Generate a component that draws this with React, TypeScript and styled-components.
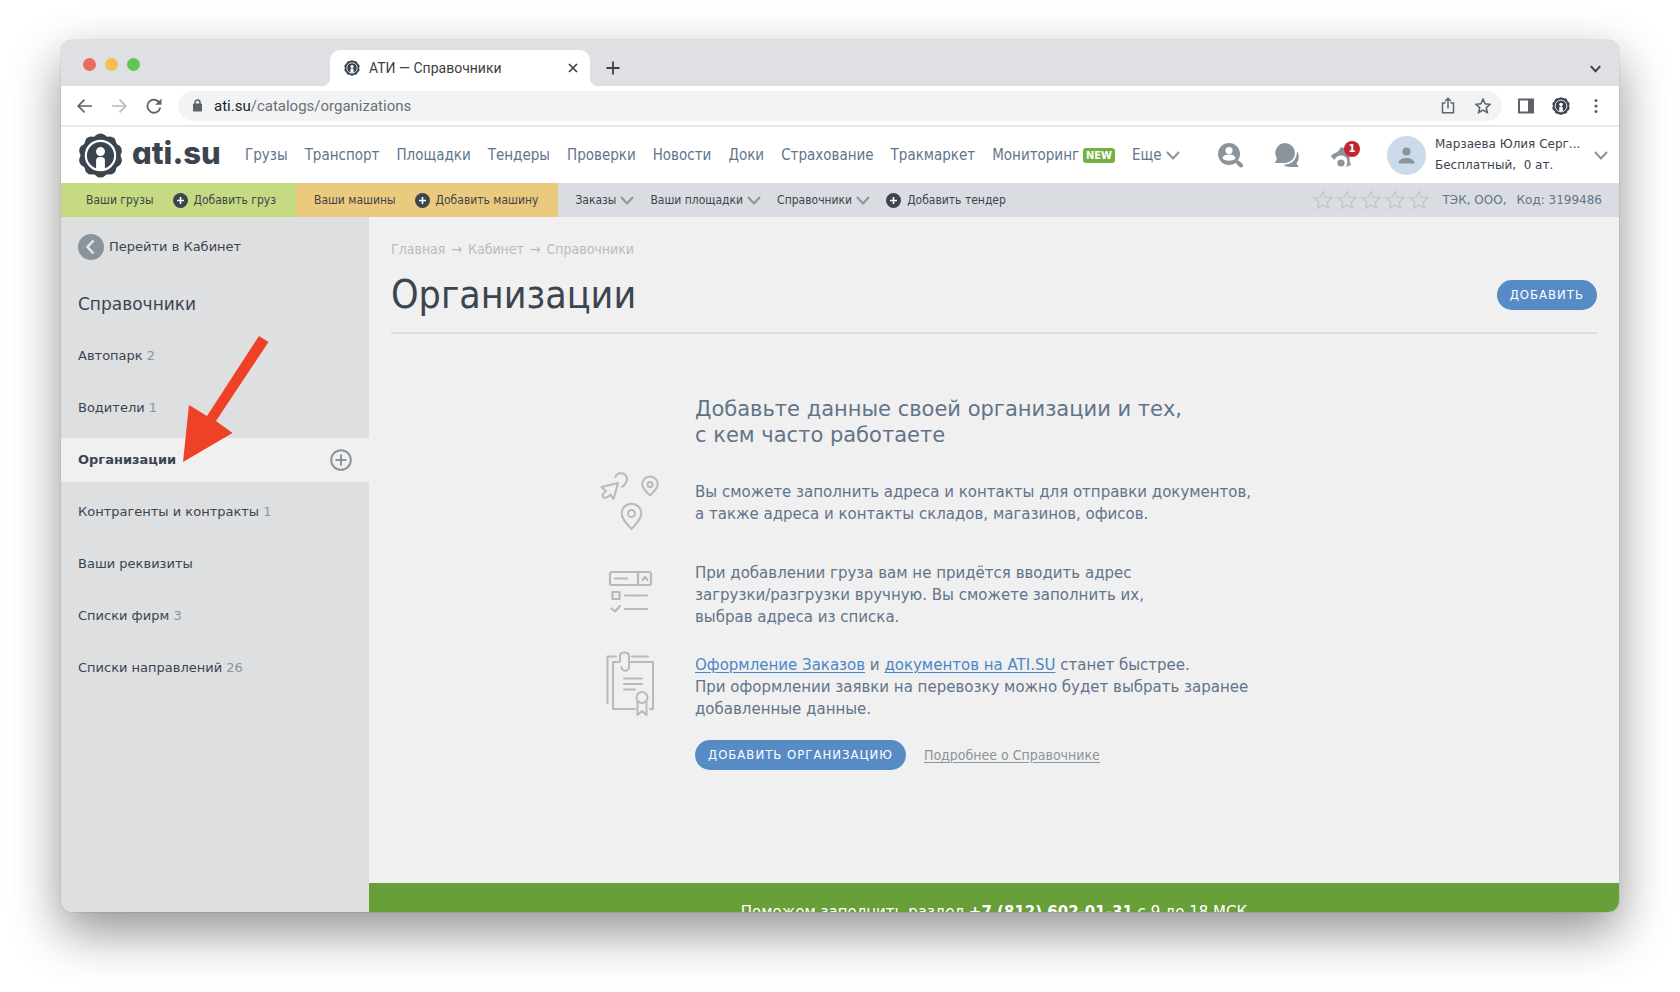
import React from 'react';
import styled, { createGlobalStyle, css } from 'styled-components';

const verdana = `"DejaVu Sans", Verdana, sans-serif`;
const tahoma = `"DejaVu Sans Condensed", "DejaVu Sans", Tahoma, sans-serif`;
const roboto = `Roboto, Arial, sans-serif`;
const ink = '#3b4550';
const slate = '#62748a';
const grey = '#8c949b';

const GlobalStyle = createGlobalStyle`
  * { box-sizing: border-box; }
  body { margin: 0; background: #fff; color: ${ink}; font-family: ${verdana}; }
  button { border: 0; padding: 0; background: none; font: inherit; color: inherit; cursor: pointer; }
  a { color: inherit; text-decoration: none; }
  h1, h2, p, ul { margin: 0; padding: 0; font-weight: 400; }
  ul { list-style: none; }
  svg { display: block; flex: none; }
`;

const Desktop = styled.div`
  height: 100vh;
  min-height: 600px;
  padding: 40px 61px 80px;
  overflow: hidden;
`;
const BrowserWindow = styled.div`
  height: 100%;
  display: flex;
  flex-direction: column;
  overflow: hidden;
  border-radius: 11px;
  background: #fff;
  box-shadow: 0 0 1px rgba(0, 0, 0, 0.5), 0 20px 50px rgba(0, 0, 0, 0.43);
`;
const TabStrip = styled.div`
  height: 46px;
  flex: none;
  display: flex;
  align-items: flex-end;
  background: #dee0e4;
  padding: 0 18px 0 22px;
`;
const Lights = styled.div`
  display: flex;
  gap: 9px;
  width: 247px;
  height: 43px;
  align-items: center;
`;
const Light = styled.button<{ $color: string }>`
  width: 13px;
  height: 13px;
  border-radius: 50%;
  background: ${(p) => p.$color};
`;
const Tab = styled.div`
  position: relative;
  width: 260px;
  height: 36px;
  display: flex;
  align-items: center;
  gap: 9px;
  padding: 0 12px 0 14px;
  border-radius: 10px 10px 0 0;
  background: #fff;
  font: 14px/16px ${roboto};
  color: #3c4043;
  &::before, &::after {
    content: '';
    position: absolute;
    bottom: 0;
    width: 8px;
    height: 8px;
  }
  &::before { left: -8px; background: radial-gradient(circle at 0 0, transparent 8px, #fff 8px); }
  &::after { right: -8px; background: radial-gradient(circle at 100% 0, transparent 8px, #fff 8px); }
`;
const TabTitle = styled.span`
  flex: 1;
  white-space: nowrap;
`;
const StripButton = styled.button<{ $end?: boolean }>`
  height: 36px;
  display: flex;
  align-items: center;
  margin-left: ${(p) => (p.$end ? 'auto' : '16px')};
`;
const Toolbar = styled.div`
  height: 41px;
  flex: none;
  display: flex;
  align-items: center;
  gap: 16px;
  padding: 0 15px;
  border-bottom: 2px solid #e8e8ea;
`;
const Omnibox = styled.div`
  flex: 1;
  height: 30px;
  display: flex;
  align-items: center;
  gap: 20px;
  padding: 0 11px 0 14px;
  border-radius: 15px;
  background: #f1f3f4;
`;
const Address = styled.div`
  flex: 1;
  display: flex;
  align-items: center;
  gap: 11px;
  font: 15px/20px ${roboto};
  color: #6b6f73;
  b { font-weight: 400; color: #202124; }
`;
const ToolGroup = styled.div`
  display: flex;
  align-items: center;
  gap: 18px;
`;

const Header = styled.header`
  height: 56px;
  flex: none;
  display: flex;
  align-items: center;
  padding: 0 11px 0 17px;
  background: #fff;
`;
const Brand = styled.a`
  display: flex;
  align-items: center;
  gap: 9px;
  width: 167px;
  font: 800 31px/40px Inter, sans-serif;
  font-feature-settings: 'cv11' 1;
  color: ${ink};
`;
const Wordmark = styled.span`
  padding-bottom: 5px;
`;
const Nav = styled.nav`
  display: flex;
  align-items: center;
  gap: 17px;
  font: 15px/20px ${tahoma};
  color: ${slate};
  white-space: nowrap;
  a, button { display: flex; align-items: center; gap: 4px; }
`;
const NewBadge = styled.span`
  padding: 0 3px;
  border-radius: 3px;
  background: #76b043;
  color: #fff;
  font: 700 11px/15px ${tahoma};
`;
const UserArea = styled.div`
  margin-left: auto;
  display: flex;
  align-items: center;
`;
const HeaderIcons = styled.div`
  display: flex;
  align-items: center;
  gap: 31px;
  margin-right: 34px;
`;
const IconWithCount = styled.button`
  position: relative;
`;
const Count = styled.span`
  position: absolute;
  top: -1px;
  right: -7px;
  width: 16px;
  height: 16px;
  border-radius: 50%;
  background: #c1272d;
  color: #fff;
  font: 700 10px/16px ${verdana};
  text-align: center;
`;
const UserText = styled.div`
  width: 151px;
  margin: 0 8px 0 9px;
  font: 12px/21px ${verdana};
  white-space: pre;
`;

const SubBar = styled.div`
  height: 34px;
  flex: none;
  display: flex;
  align-items: stretch;
  background: #d9dce1;
  font: 12px/16px ${tahoma};
  white-space: nowrap;
`;
const SubGroup = styled.div<{ $tone?: string; $left: number }>`
  display: flex;
  align-items: center;
  gap: ${(p) => (p.$tone ? 19 : 16)}px;
  padding: 0 20px 0 ${(p) => p.$left}px;
  background: ${(p) => p.$tone || 'transparent'};
  a, button { display: flex; align-items: center; gap: 4px; }
`;
const AddLink = styled.a`
  && { gap: 6px; }
`;
const Firm = styled.div`
  margin-left: auto;
  display: flex;
  align-items: center;
  gap: 10px;
  padding-right: 17px;
  font: 12px/16px ${verdana};
  color: ${slate};
`;
const Stars = styled.div`
  display: flex;
  gap: 4px;
  margin-right: 4px;
`;

const Page = styled.div`
  flex: 1;
  min-height: 0;
  display: flex;
  overflow: hidden;
`;
const Sidebar = styled.aside`
  position: relative;
  flex: none;
  width: 308px;
  background: #dddfe1;
  font: 13px/20px ${verdana};
`;
const BackLink = styled.a`
  display: flex;
  align-items: center;
  gap: 5px;
  margin: 17px 17px 0;
`;
const SideTitle = styled.h2`
  margin: 32px 17px 18px;
  font-size: 17px;
  line-height: 24px;
`;
const SideList = styled.ul`
  display: grid;
  gap: 8px;
`;
const SideItem = styled.li<{ $active?: boolean }>`
  height: 44px;
  display: flex;
  align-items: center;
  justify-content: space-between;
  padding: 0 17px;
  ${(p) => p.$active && css`
    background: #f0f0f0;
    font-weight: 700;
  `}
  span { color: ${grey}; }
`;
const Pointer = styled.svg`
  position: absolute;
  left: 122px;
  top: 119px;
`;

const Main = styled.main`
  flex: 1;
  background: #f0f0f0;
`;
const Content = styled.div`
  padding: 22px 22px 113px;
`;
const Crumbs = styled.nav`
  display: flex;
  gap: 6px;
  font: 14px/20px ${tahoma};
  color: #b9bbbd;
`;
const TitleRow = styled.div`
  display: flex;
  align-items: center;
  justify-content: space-between;
  padding: 14px 0 15px;
  border-bottom: 2px solid #dcddde;
`;
const Title = styled.h1`
  font: 39px/44px ${tahoma};
`;
const PillButton = styled.button`
  height: 30px;
  padding: 0 13px;
  border-radius: 15px;
  background: #578bc5;
  color: #fff;
  font: 13px/30px ${tahoma};
  letter-spacing: 1px;
`;
const Guide = styled.section`
  width: 788px;
  margin: 62px auto 0;
  display: grid;
  grid-template-columns: 60px 1fr;
  column-gap: 35px;
  row-gap: 26px;
  font-size: 15px;
  line-height: 22px;
  color: ${slate};
`;
const GuideTitle = styled.h2`
  grid-column: 2;
  margin-bottom: -4px;
  font-size: 21px;
  line-height: 26px;
`;
const GuideText = styled.p`
  min-height: 66px;
  display: flex;
  flex-direction: column;
  justify-content: center;
  white-space: nowrap;
`;
const TextLink = styled.a`
  color: #4a87c7;
  text-decoration: underline;
  text-underline-offset: 2px;
`;
const Actions = styled.div`
  grid-column: 2;
  margin-top: -6px;
  display: flex;
  align-items: center;
  gap: 18px;
`;
const MoreLink = styled.a`
  font: 14px/20px ${tahoma};
  color: ${grey};
  text-decoration: underline;
  text-underline-offset: 2px;
`;
const HelpBar = styled.footer`
  padding: 19px 20px;
  background: #689f38;
  color: #fff;
  text-align: center;
  font-size: 15px;
  line-height: 20px;
`;

const Emblem = ({ size }: { size: number }) => (
  <svg width={size} height={size} viewBox="0 0 46 46" aria-hidden="true">
    <circle cx="23" cy="23" r="20.600" fill={ink} />
    {Array.from({ length: 10 }, (_, i) => {
      const a = (i * Math.PI) / 5 - Math.PI / 2;
      return <circle key={i} cx={23 + 16 * Math.cos(a)} cy={23 + 16 * Math.sin(a)} r="6.6" fill={ink} />;
    })}
    <circle cx="23" cy="23" r="15" fill="none" stroke="#fff" strokeWidth="2.2" />
    <circle cx="23" cy="19" r="4.600" fill="#fff" />
    <path d="M18.500 37V28c0-2.500 1.500-3.500 4.500-3.500s4.500 1 4.500 3.500v9z" fill="#fff" />
  </svg>
);
const Chevron = ({ color = grey, size = 14, weight = 2 }) => (
  <svg width={size} height={size} viewBox="0 0 14 14" fill="none" stroke={color} strokeWidth={weight} aria-hidden="true">
    <path d="M1 4l6 6.500L13 4" />
  </svg>
);
const PlusDisc = () => (
  <svg width="15" height="15" viewBox="0 0 15 15" aria-hidden="true">
    <circle cx="7.5" cy="7.5" r="7.5" fill={ink} />
    <path d="M7.500 4v7M4 7.500h7" stroke="#fff" strokeWidth="1.600" />
  </svg>
);
const starPath = 'M10 1.500l2.600 5.700 6.100.700-4.600 4.200 1.300 6.100L10 15.100l-5.400 3.100 1.300-6.100L1.300 7.900l6.100-.700z';
const Star = ({ size, color, weight }: { size: number; color: string; weight: number }) => (
  <svg width={size} height={size} viewBox="0 0 20 20" fill="none" stroke={color} strokeWidth={weight} aria-hidden="true">
    <path d={starPath} />
  </svg>
);

const navItems = ['Грузы', 'Транспорт', 'Площадки', 'Тендеры', 'Проверки', 'Новости', 'Доки', 'Страхование', 'Тракмаркет'];
const sideItems: { label: string; count?: number; active?: boolean }[] = [
  { label: 'Автопарк', count: 2 },
  { label: 'Водители', count: 1 },
  { label: 'Организации', active: true },
  { label: 'Контрагенты и контракты', count: 1 },
  { label: 'Ваши реквизиты' },
  { label: 'Списки фирм', count: 3 },
  { label: 'Списки направлений', count: 26 },
];

const PinsArt = () => (
  <svg width="60" height="66" viewBox="0 0 60 66" fill="none" stroke="#b7b9bb" strokeWidth="2" strokeLinejoin="round" strokeLinecap="round" aria-hidden="true">
    <path d="M1.500 17L18 13l-4.500 16-3-4.500c-2 2.500-5.500 4.500-7.500 2.500-1.500-2 .500-4 3-5.500z" />
    <path d="M15.500 7c2-6 11-4.500 11.500 2 0 3.500-2.500 6-5 8" />
    <path d="M50 25.500c-4-4-7.800-7-7.800-11.200a7.800 7.800 0 0 1 15.600 0c0 4.200-3.800 7.200-7.800 11.200z" />
    <circle cx="50" cy="14.500" r="2.500" />
    <path d="M31.500 59c-5-5.500-9.800-10-9.800-15.500a9.800 9.800 0 0 1 19.600 0c0 5.500-4.800 10-9.800 15.500z" />
    <circle cx="31.500" cy="43.500" r="3.500" />
  </svg>
);
const FormArt = () => (
  <svg width="60" height="66" viewBox="0 0 60 66" fill="none" stroke="#b7b9bb" strokeWidth="2.200" strokeLinejoin="round" strokeLinecap="round" aria-hidden="true">
    <rect x="10" y="10" width="41" height="13" rx="2" />
    <path d="M38 10v13M15 16.500h12M42.500 18l2.500-3 2.500 3" />
    <rect x="12.500" y="30" width="7" height="7" />
    <path d="M25 33.500h22M25 47h22M11.500 46.500l3.500 3 5-5.500" />
  </svg>
);
const DocumentArt = () => (
  <svg width="60" height="66" viewBox="0 0 60 66" fill="none" stroke="#b7b9bb" strokeWidth="2" strokeLinejoin="round" strokeLinecap="round" overflow="visible" aria-hidden="true">
    <path d="M7.500 49V2.500H16M32 2.500h16" />
    <path d="M18 8h-5v47h22M30 8h23v47h-3" />
    <path d="M20 8V1.500a4 4 0 0 1 4-3h1a4 4 0 0 1 4 3V13a3.500 3.500 0 0 1-7.500 0" />
    <path d="M24 24.500h18M24 30h18M24 35.500h11" />
    <circle cx="42" cy="43.500" r="5.500" />
    <path d="M37.500 48v13l4.500-4 4.500 4V48" />
  </svg>
);

export default function App() {
  return (
    <>
      <GlobalStyle />
      <Desktop>
        <BrowserWindow>
          <TabStrip>
            <Lights>
              <Light $color="#ed6a5e" aria-label="Закрыть окно" />
              <Light $color="#f5bf4f" aria-label="Свернуть" />
              <Light $color="#61c554" aria-label="Развернуть" />
            </Lights>
            <Tab>
              <Emblem size={16} />
              <TabTitle>АТИ — Справочники</TabTitle>
              <button aria-label="Закрыть вкладку">
                <svg width="10" height="10" viewBox="0 0 10 10" stroke="#3c4043" strokeWidth="1.700">
                  <path d="M1 1l8 8M9 1L1 9" />
                </svg>
              </button>
            </Tab>
            <StripButton aria-label="Новая вкладка">
              <svg width="14" height="14" viewBox="0 0 14 14" stroke="#3c4043" strokeWidth="1.800">
                <path d="M7 .500v13M.500 7h13" />
              </svg>
            </StripButton>
            <StripButton $end aria-label="Список вкладок">
              <Chevron color="#3c4043" size={11} weight={2.4} />
            </StripButton>
          </TabStrip>
          <Toolbar>
            <ToolGroup>
              <button aria-label="Назад">
                <svg width="17" height="16" viewBox="0 0 17 16" fill="none" stroke="#5f6368" strokeWidth="1.700">
                  <path d="M16 8H2.500M8.500 1.700L2.200 8l6.300 6.300" />
                </svg>
              </button>
              <button aria-label="Вперёд">
                <svg width="17" height="16" viewBox="0 0 17 16" fill="none" stroke="#b9bbbe" strokeWidth="1.700">
                  <path d="M1 8h13.500M8.500 1.700L14.800 8l-6.300 6.300" />
                </svg>
              </button>
              <button aria-label="Обновить">
                <svg width="16" height="16" viewBox="0 0 16 16" fill="none" stroke="#5f6368" strokeWidth="1.800">
                  <path d="M13.600 5A6.500 6.500 0 1 0 14.300 9.500" />
                  <path d="M15.500.500v6.300H9.200z" fill="#5f6368" stroke="none" />
                </svg>
              </button>
            </ToolGroup>
            <Omnibox>
              <Address>
                <svg width="11" height="13" viewBox="0 0 11 13" aria-hidden="true">
                  <rect x="1" y="4.500" width="9" height="8" rx="1" fill="#5f6368" />
                  <path d="M3 5V3.500a2.500 2.500 0 0 1 5 0V5" fill="none" stroke="#5f6368" strokeWidth="1.500" />
                </svg>
                <span><b>ati.su</b>/catalogs/organizations</span>
              </Address>
              <button aria-label="Поделиться">
                <svg width="14" height="17" viewBox="0 0 14 17" fill="none" stroke="#5f6368" strokeWidth="1.500">
                  <path d="M4.500 6H1.500v9.700h11V6h-3M7 11.500V1.500M4 4.300l3-3 3 3" />
                </svg>
              </button>
              <button aria-label="В закладки"><Star size={16} color="#5f6368" weight={2} /></button>
            </Omnibox>
            <ToolGroup>
              <button aria-label="Боковая панель">
                <svg width="16" height="16" viewBox="2 0 16 16">
                  <path d="M3 1.500h14v13H3z" fill="#fff" stroke="#5f6368" strokeWidth="2" />
                  <path d="M12 1h5v14h-5z" fill="#5f6368" />
                </svg>
              </button>
              <button aria-label="Профиль"><Emblem size={18} /></button>
              <button aria-label="Меню">
                <svg width="16" height="16" viewBox="0 0 16 16" fill="#5f6368">
                  <circle cx="8" cy="2.500" r="1.600" />
                  <circle cx="8" cy="8" r="1.600" />
                  <circle cx="8" cy="13.500" r="1.600" />
                </svg>
              </button>
            </ToolGroup>
          </Toolbar>

          <Header>
            <Brand href="#"><Emblem size={45} /><Wordmark>ati.su</Wordmark></Brand>
            <Nav>
              {navItems.map((item) => <a key={item} href="#">{item}</a>)}
              <a href="#">Мониторинг<NewBadge>NEW</NewBadge></a>
              <button>Еще<Chevron /></button>
            </Nav>
            <UserArea>
              <HeaderIcons>
                <button aria-label="Поиск участников">
                  <svg width="26" height="26" viewBox="0 0 26 26">
                    <circle cx="12" cy="12" r="11" fill={grey} />
                    <path d="M21 20.500l3 3" stroke={grey} strokeWidth="4" strokeLinecap="round" />
                    <circle cx="12" cy="8.500" r="3.500" fill="#fff" />
                    <path d="M5.500 16.500c.500-3.500 3.500-4 6.500-4s6 .500 6.500 4c-3.500 3-9.500 3-13 0z" fill="#fff" />
                  </svg>
                </button>
                <button aria-label="Сообщения">
                  <svg width="26" height="26" viewBox="0 0 26 26" fill={grey}>
                    <path d="M11 1a10 10 0 1 1 0 20H1l2-4.500A10 10 0 0 1 11 1z" />
                    <path d="M23 9c3 4.500 2 9.500-.500 12l2 4H16c-3 0-5-1-6.500-2.300C17.500 22.500 23 18 23 9z" />
                  </svg>
                </button>
                <IconWithCount aria-label="Уведомления">
                  <svg width="22" height="26" viewBox="0 0 22 26" fill={grey}>
                    <path d="M10 5l9 3-.500 7c0 4 .500 5.500 1.500 8l-5 2c3-6 1-11-4-11.500-4-.300-6.500 1.500-7.500 4.500L0 14.500c2-3.500 4-3 6-4.500 2-1.300 3-3 4-5z" />
                    <circle cx="10" cy="21" r="3.600" />
                  </svg>
                  <Count>1</Count>
                </IconWithCount>
              </HeaderIcons>
              <svg width="39" height="39" viewBox="0 0 39 39" aria-hidden="true">
                <circle cx="19.500" cy="19.500" r="19.500" fill="#ccdbec" />
                <circle cx="19.500" cy="15.500" r="4" fill={grey} />
                <path d="M11.500 27.500c0-4 4-5.500 8-5.500s8 1.500 8 5.500z" fill={grey} />
              </svg>
              <UserText>
                <div>Марзаева Юлия Серг...</div>
                <div>Бесплатный,  0 ат.</div>
              </UserText>
              <button aria-label="Меню пользователя"><Chevron /></button>
            </UserArea>
          </Header>

          <SubBar>
            <SubGroup $tone="#c6da82" $left={25}>
              <a href="#">Ваши грузы</a>
              <AddLink href="#"><PlusDisc />Добавить груз</AddLink>
            </SubGroup>
            <SubGroup $tone="#ecca7d" $left={18}>
              <a href="#">Ваши машины</a>
              <AddLink href="#"><PlusDisc />Добавить машину</AddLink>
            </SubGroup>
            <SubGroup $left={17}>
              <button>Заказы<Chevron /></button>
              <button>Ваши площадки<Chevron /></button>
              <button>Справочники<Chevron /></button>
              <AddLink href="#"><PlusDisc />Добавить тендер</AddLink>
            </SubGroup>
            <Firm>
              <Stars>
                {[1, 2, 3, 4, 5].map((n) => <Star key={n} size={20} color="#c4c6c8" weight={1.4} />)}
              </Stars>
              <span>ТЭК, ООО,</span>
              <span>Код: 3199486</span>
            </Firm>
          </SubBar>

          <Page>
            <Sidebar>
              <BackLink href="#">
                <svg width="26" height="26" viewBox="0 0 26 26" fill="none" aria-hidden="true">
                  <circle cx="13" cy="13" r="13" fill={grey} />
                  <path d="M15.500 6.500L9.500 13l6 6.500" stroke="#e6e8ea" strokeWidth="2.500" />
                </svg>
                Перейти в Кабинет
              </BackLink>
              <SideTitle>Справочники</SideTitle>
              <SideList>
                {sideItems.map((item) => (
                  <SideItem key={item.label} $active={item.active}>
                    <a href="#">{item.label} {item.count && <span>{item.count}</span>}</a>
                    {item.active && (
                      <button aria-label="Добавить организацию в список">
                        <svg width="22" height="22" viewBox="0 0 22 22" fill="none" stroke={grey} strokeWidth="2">
                          <circle cx="11" cy="11" r="9.800" />
                          <path d="M11 5.500v11M5.500 11h11" />
                        </svg>
                      </button>
                    )}
                  </SideItem>
                ))}
              </SideList>
              <Pointer width="86" height="127" viewBox="0 0 86 127" aria-hidden="true">
                <path d="M76 0l9.500 6L33 85l16.500 12L0 126l6-57 18 11z" fill="#ee4127" />
              </Pointer>
            </Sidebar>
            <Main>
              <Content>
                <Crumbs>
                  <a href="#">Главная</a>→<a href="#">Кабинет</a>→<a href="#">Справочники</a>
                </Crumbs>
                <TitleRow>
                  <Title>Организации</Title>
                  <PillButton>ДОБАВИТЬ</PillButton>
                </TitleRow>
                <Guide>
                  <GuideTitle>Добавьте данные своей организации и тех,<br />с кем часто работаете</GuideTitle>
                  <PinsArt />
                  <GuideText>
                    <span>Вы сможете заполнить адреса и контакты для отправки документов,</span>
                    <span>а также адреса и контакты складов, магазинов, офисов.</span>
                  </GuideText>
                  <FormArt />
                  <GuideText>
                    <span>При добавлении груза вам не придётся вводить адрес</span>
                    <span>загрузки/разгрузки вручную. Вы сможете заполнить их,</span>
                    <span>выбрав адреса из списка.</span>
                  </GuideText>
                  <DocumentArt />
                  <GuideText>
                    <span>
                      <TextLink href="#">Оформление Заказов</TextLink> и <TextLink href="#">документов на ATI.SU</TextLink> станет быстрее.
                    </span>
                    <span>При оформлении заявки на перевозку можно будет выбрать заранее</span>
                    <span>добавленные данные.</span>
                  </GuideText>
                  <Actions>
                    <PillButton>ДОБАВИТЬ ОРГАНИЗАЦИЮ</PillButton>
                    <MoreLink href="#">Подробнее о Справочнике</MoreLink>
                  </Actions>
                </Guide>
              </Content>
              <HelpBar>Поможем заполнить раздел <b>+7 (812) 602-01-31</b> с 9 до 18 МСК</HelpBar>
            </Main>
          </Page>
        </BrowserWindow>
      </Desktop>
    </>
  );
}
